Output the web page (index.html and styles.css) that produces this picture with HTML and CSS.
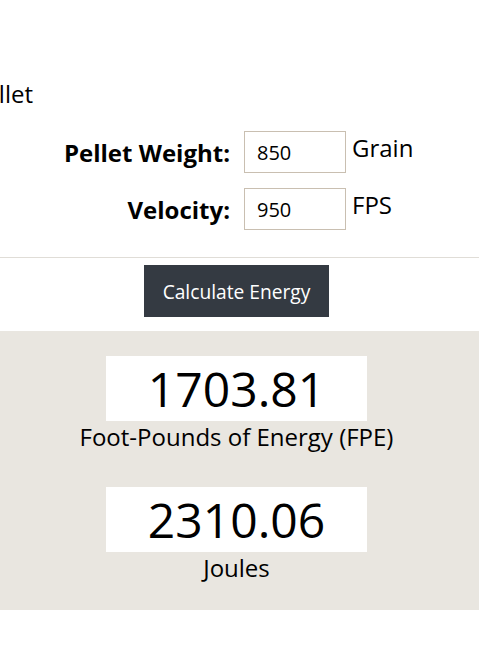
FILE: index.html
```html
<!DOCTYPE html>
<html lang="en">
<head>
<meta charset="utf-8">
<title>Pellet Energy Calculator</title>
<link rel="stylesheet" href="styles.css">
</head>
<body>
<div class="intro"><p class="intro-text">Enter the weight and velocity of your pellet</p></div>
<form class="calc">
  <div class="fields">
    <label class="field-label" for="weight">Pellet Weight:</label>
    <input class="field-input" id="weight" type="text" value="850">
    <span class="field-unit">Grain</span>
    <label class="field-label" for="velocity">Velocity:</label>
    <input class="field-input" id="velocity" type="text" value="950">
    <span class="field-unit">FPS</span>
  </div>
  <hr class="divider">
  <div class="actions"><button class="btn" type="button">Calculate Energy</button></div>
</form>
<section class="results">
  <div class="result">
    <div class="result-value">1703.81</div>
    <div class="result-label">Foot-Pounds of Energy (FPE)</div>
  </div>
  <div class="result">
    <div class="result-value">2310.06</div>
    <div class="result-label">Joules</div>
  </div>
</section>
</body>
</html>
```
FILE: styles.css
```css
html, body {
  margin: 0;
  padding: 0;
  background: #ffffff;
  color: #000000;
  font-family: "Open Sans", "Liberation Sans", sans-serif;
  overflow: hidden;
}

.intro {
  display: flex;
  justify-content: flex-end;
  width: 33px;
  padding-top: 77px;
}

.intro-text {
  margin: 0;
  white-space: nowrap;
  font-size: 24px;
  line-height: 33px;
  flex: none;
}

.calc {
  margin: 0;
}

.fields {
  display: grid;
  grid-template-columns: 230px 102px auto;
  column-gap: 14px;
  row-gap: 15px;
  padding-top: 21px;
  align-items: center;
}

.field-label {
  grid-column: 1;
  font-weight: 700;
  font-size: 24px;
  line-height: 33px;
  text-align: right;
}

.field-input {
  grid-column: 2;
  box-sizing: border-box;
  width: 102px;
  height: 42px;
  margin: 0;
  border: 1px solid #c9bfb1;
  border-radius: 0;
  padding: 0 12px;
  font-family: "Open Sans", "Liberation Sans", sans-serif;
  font-size: 20px;
  color: #000;
  background: #fff;
  outline: none;
}

.field-unit {
  grid-column: 3;
  align-self: start;
  font-size: 24px;
  line-height: 33px;
  margin-left: -8px;
}

.divider {
  border: 0;
  border-top: 1px solid #e0ddd7;
  margin: 27px 0 0;
  height: 0;
}

.actions {
  display: flex;
  justify-content: center;
  padding: 7px 6px 14px 0;
}

.btn {
  width: 185px;
  height: 52px;
  background: #343a42;
  color: #ffffff;
  border: 0;
  border-radius: 0;
  font-family: "Open Sans", "Liberation Sans", sans-serif;
  font-size: 19.2px;
  padding: 0;
}

.results {
  background: #e9e6e0;
  display: flex;
  flex-direction: column;
  align-items: center;
  padding: 25px 6px 26px 0;
  gap: 34px;
}

.result {
  display: flex;
  flex-direction: column;
  align-items: center;
}

.result-value {
  background: #ffffff;
  width: 261px;
  height: 65px;
  text-align: center;
  font-size: 48px;
  line-height: 65px;
}

.result-label {
  font-size: 24px;
  line-height: 32px;
}
```
